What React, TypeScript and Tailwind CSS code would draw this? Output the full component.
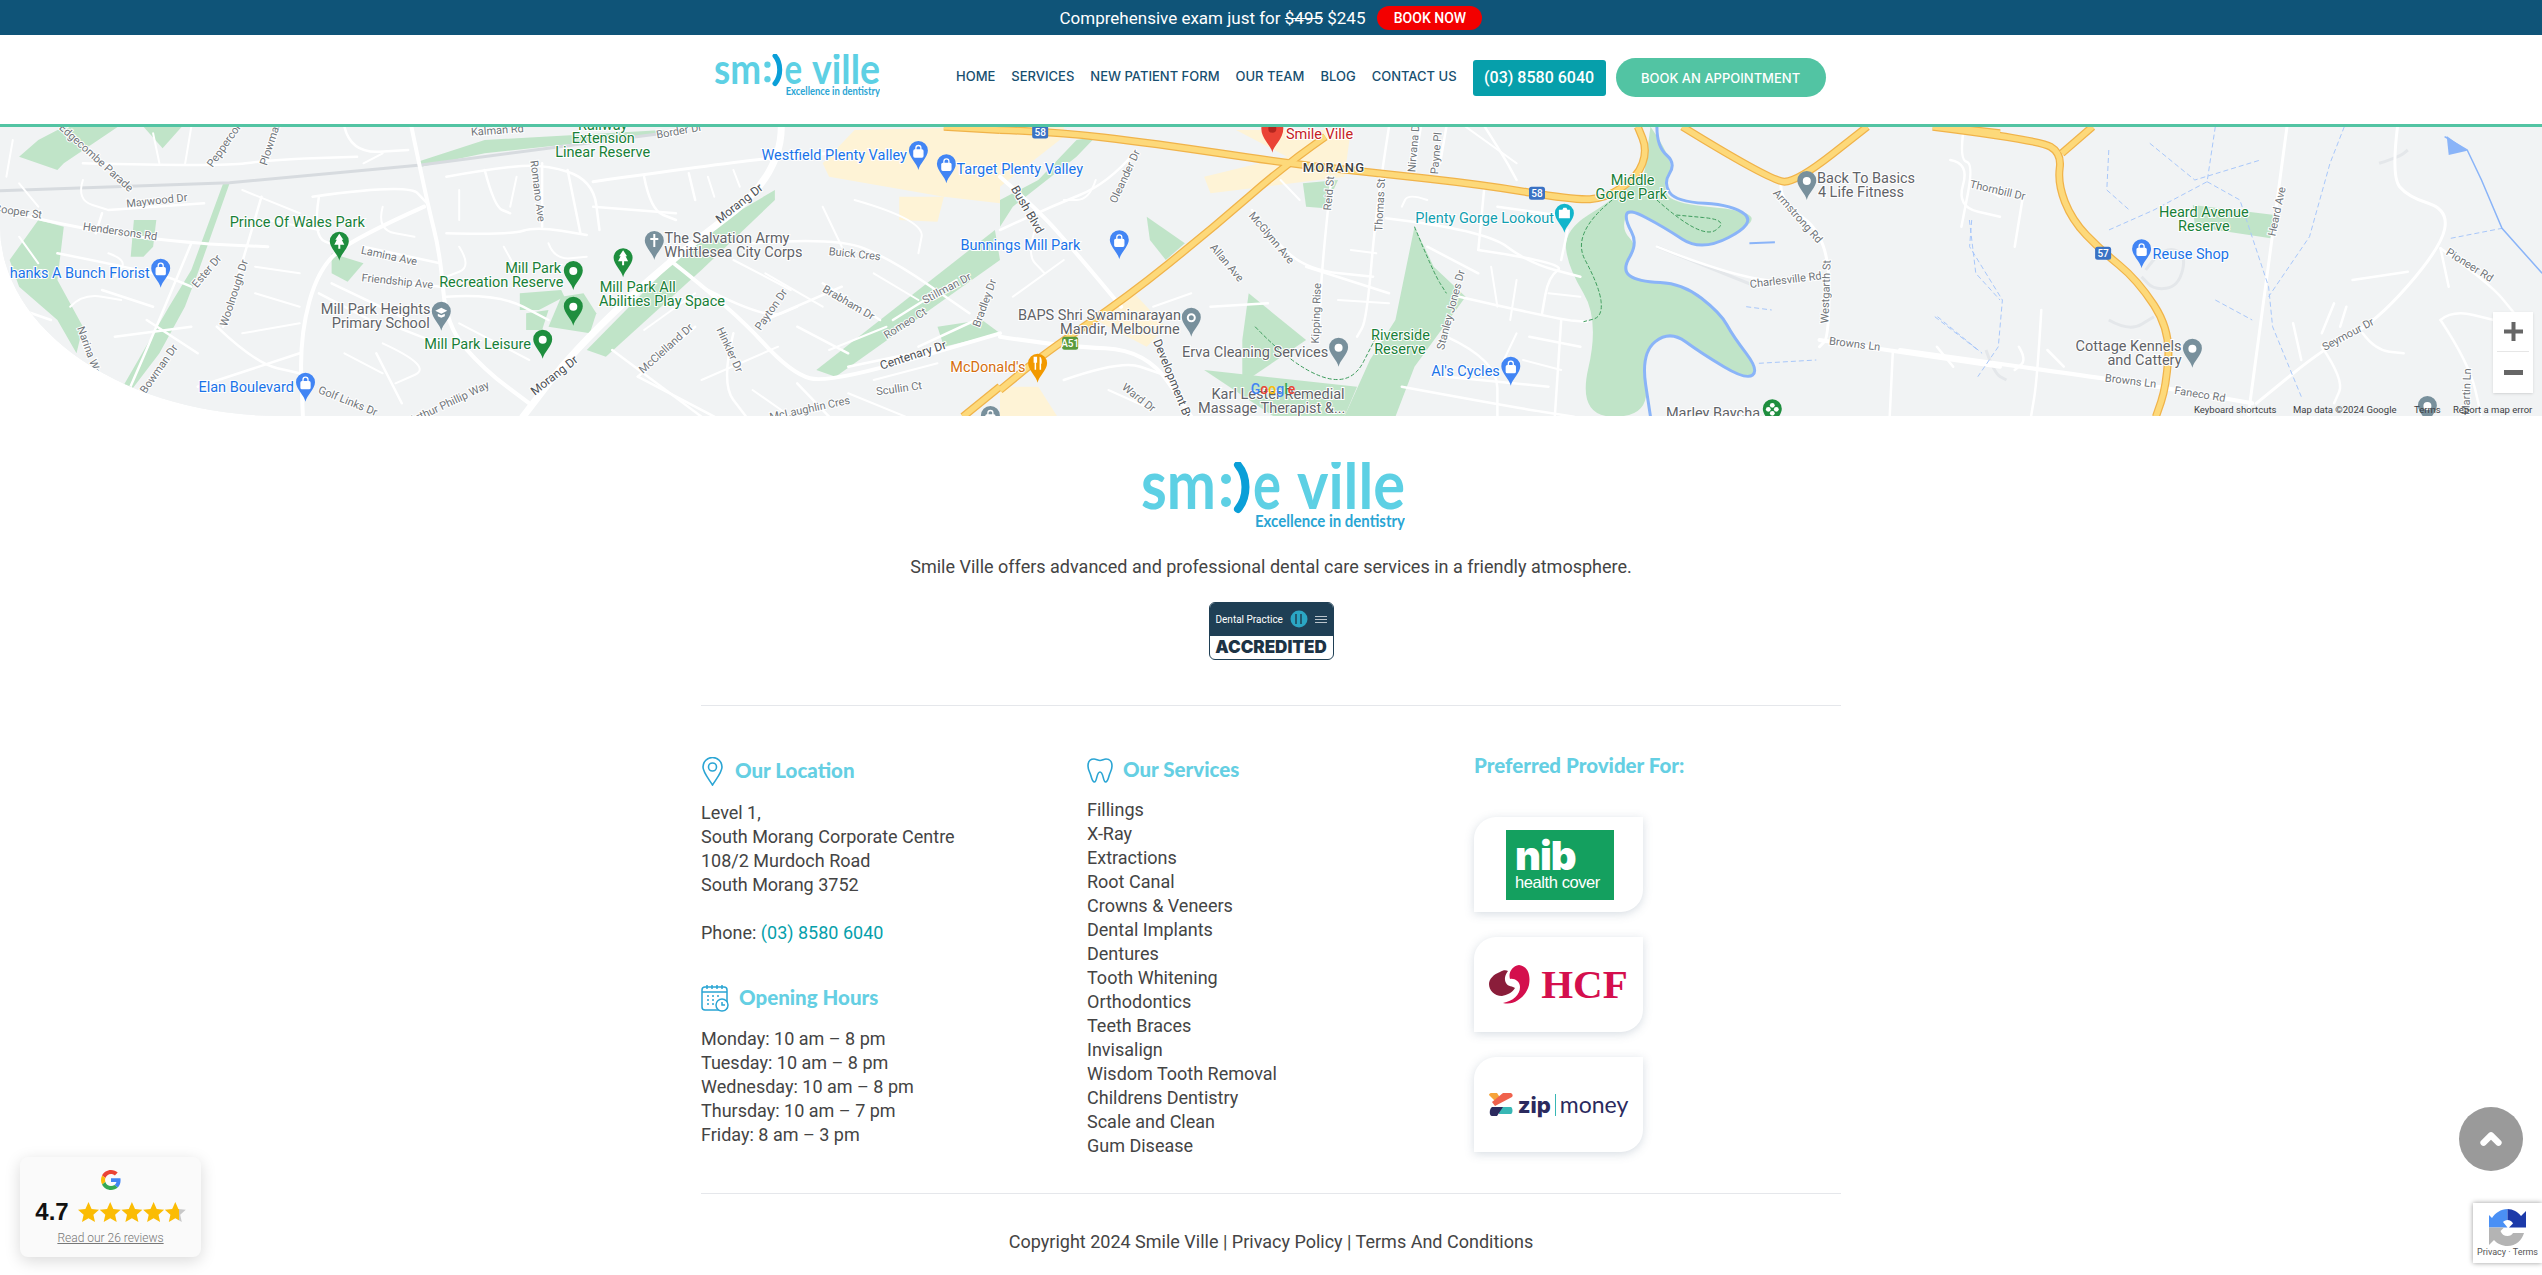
import { ChevronUp } from 'lucide-react';
import type { ReactNode } from 'react';

type Region = 'a' | 'b' | 'c';

// map data was measured on three crops, so each list says which crop its numbers come from
const toPage = (r: Region, x: number, y: number) => {
  if (r === 'a') return [x / 1.568, 120 + y / 3];
  if (r === 'b') return [1000 + x / 1.568, 120 + y / 3];
  return [1900 + x / 2.442, 120 + y / 3];
};

const parse = (r: Region, s: string) =>
  s.split(' ').map((p) => {
    const [x, y] = p.split(',').map(Number);
    return toPage(r, x, y);
  });

const pts = (r: Region, s: string) =>
  parse(r, s)
    .map((p) => `${p[0].toFixed(1)},${p[1].toFixed(1)}`)
    .join(' ');

// rounds the corners of a measured line, for roads and the river
const curve = (r: Region, s: string, close = false) => {
  const p = parse(r, s);
  let d = `M${p[0][0].toFixed(1)} ${p[0][1].toFixed(1)}`;
  for (let i = 1; i < p.length - 1; i++) {
    const mx = (p[i][0] + p[i + 1][0]) / 2;
    const my = (p[i][1] + p[i + 1][1]) / 2;
    d += ` Q${p[i][0].toFixed(1)} ${p[i][1].toFixed(1)} ${mx.toFixed(1)} ${my.toFixed(1)}`;
  }
  const last = p[p.length - 1];
  d += ` L${last[0].toFixed(1)} ${last[1].toFixed(1)}`;
  return close ? d + 'Z' : d;
};

const green: [Region, string][] = [
  ['a', '30,110 60,60 100,20 185,20 100,130 90,150'],
  ['a', '225,20 285,20 255,85'],
  ['a', '15,420 60,300 100,320 90,480 130,620 120,700 90,600 30,500'],
  ['a', '210,300 245,300 240,380 225,410 205,410'],
  ['a', '350,190 360,190 310,460 290,560 250,700 200,825 185,825 265,560 300,450'],
  ['a', '520,400 570,430 545,485 520,460'],
  ['a', '655,125 760,60 1040,30 1050,40 760,100 660,140'],
  ['a', '815,520 880,510 885,530 845,570 815,570'],
  ['a', '825,580 860,570 850,630 825,630'],
  ['a', '880,530 915,520 935,580 925,640 860,620'],
  ['a', '1215,210 1100,340 920,690 950,710 1100,450 1215,240'],
  ['a', '1560,330 1280,750 1310,770 1568,420'],
  ['a', '1540,600 1470,620 1480,680 1568,640'],
  ['b', '120,60 150,50 120,110 20,260 0,320 0,240 60,180'],
  ['b', '230,290 290,370 260,420 235,360'],
  ['b', '475,190 530,180 510,265 480,260'],
  ['b', '650,320 680,440 730,530 650,740 620,890 540,890 580,720 620,600'],
  ['b', '390,520 480,660 380,790 380,660'],
  ['b', '320,750 560,800 540,890 430,890'],
  ['c', '715,255 915,285 905,355 720,320'],
];

const gorgePark =
  '1020,20 1060,130 1040,190 1050,250 1170,270 1185,310 1100,395 1040,320 985,265 975,330 1000,380 975,450 1000,485 1070,490 1130,580 1150,650 1190,750 1170,780 1100,700 1050,630 1005,700 1020,890 905,890 940,600 890,440 885,330 960,240 1010,160';

const sand: [Region, string][] = [
  ['a', '1290,130 1340,30 1568,20 1568,250 1480,230 1410,230 1410,300 1470,305 1480,230 1300,170'],
  ['b', '0,20 100,20 100,50 0,200'],
  ['b', '370,30 550,30 540,170 330,220 320,170 450,110'],
  ['b', '210,520 260,620 230,680 150,600'],
  ['b', '0,800 60,800 90,890 0,890'],
];

// [crop, points, width]
const roads: [Region, string, number][] = [
  ['a', '645,20 670,250 690,400 700,620 760,750 830,850', 4],
  ['a', '665,260 560,350 500,440 470,650 475,890', 4],
  ['a', '1225,20 1225,170 1050,420 900,690 820,890', 7],
  ['a', '1050,420 1150,570 1240,760 1300,790 1568,640', 4],
  ['a', '930,185 1170,120 1300,100', 3],
  ['a', '0,270 130,330 300,370 420,380', 3],
  ['a', '130,130 350,140 420,120 560,110', 2.5],
  ['a', '540,20 550,100 640,90', 2.5],
  ['a', '700,170 760,150 850,130 930,180 940,330', 2.5],
  ['a', '760,150 775,260 800,280', 2.5],
  ['a', '850,130 850,320', 2.5],
  ['a', '890,150 910,340', 2.5],
  ['a', '700,340 800,345 840,320 920,345', 2.5],
  ['a', '1010,170 1020,270 1060,300', 2.5],
  ['a', '1080,160 1090,240', 2.5],
  ['a', '930,260 1060,280', 2.5],
  ['a', '490,230 640,190 670,250', 2.5],
  ['a', '500,230 490,350 530,380', 2.5],
  ['a', '570,380 690,430', 2.5],
  ['a', '570,470 690,500', 2.5],
  ['a', '500,520 580,600', 2.5],
  ['a', '700,530 780,520 860,600', 2.5],
  ['a', '170,270 320,250', 2.5],
  ['a', '160,280 150,340', 2.5],
  ['a', '90,400 250,460 300,500', 2.5],
  ['a', '300,370 250,600 200,820', 2.5],
  ['a', '410,230 350,620', 2.5],
  ['a', '340,620 400,730 470,760', 2.5],
  ['a', '20,560 80,600', 2.5],
  ['a', '160,510 240,560', 2.5],
  ['a', '180,650 300,620', 2.5],
  ['a', '230,600 310,700', 2.5],
  ['a', '310,800 470,700', 2.5],
  ['a', '520,490 640,600', 2.5],
  ['a', '590,700 630,850', 2.5],
  ['a', '620,620 700,680', 2.5],
  ['a', '960,690 1100,890', 2.5],
  ['a', '1090,620 1000,770', 2.5],
  ['a', '1150,640 1130,790 1170,890', 2.5],
  ['a', '1000,770 1120,890', 2.5],
  ['a', '1250,790 1300,890', 2.5],
  ['a', '1180,370 1310,350 1400,420 1520,580', 2.5],
  ['a', '1290,490 1380,600', 2.5],
  ['a', '1200,600 1320,500', 2.5],
  ['a', '1100,500 1200,600 1250,560', 2.5],
  ['a', '1400,600 1500,480', 2.5],
  ['a', '1440,680 1530,600', 2.5],
  ['a', '1250,620 1330,700', 2.5],
  ['a', '1330,740 1480,680', 2.5],
  // side streets
  ['a', '240,40 250,130', 2],
  ['a', '300,20 290,135', 2],
  ['a', '20,60 10,170', 2],
  ['a', '130,180 120,240 170,270', 2],
  ['a', '30,190 60,260', 2],
  ['a', '380,210 470,280', 2],
  ['a', '420,300 500,330', 2],
  ['a', '170,400 200,420 180,470', 2],
  ['a', '30,350 60,430', 2],
  ['a', '110,560 130,520 190,540', 2],
  ['a', '400,440 470,460', 2],
  ['a', '400,520 470,560', 2],
  ['a', '380,640 470,610', 2],
  ['a', '570,130 600,100', 2],
  ['a', '600,260 590,330 650,350', 2],
  ['a', '720,210 720,300', 2],
  ['a', '810,170 800,260', 2],
  ['a', '720,380 740,440 700,470', 2],
  ['a', '790,380 810,450', 2],
  ['a', '860,370 870,420 920,410', 2],
  ['a', '600,670 680,740 620,790', 2],
  ['a', '540,700 600,760', 2],
  ['a', '720,610 830,720', 2],
  ['a', '1110,170 1120,230', 2],
  ['a', '1150,150 1160,200', 2],
  ['a', '1290,260 1320,380', 2],
  ['a', '1340,240 1450,300 1440,400', 2],
  ['a', '1370,460 1440,540', 2],
  ['a', '1150,420 1240,510', 2],
  ['a', '1200,460 1290,560', 2],
  ['a', '1010,630 1090,520', 2],
  ['a', '1220,680 1100,780', 2],
  ['a', '1390,620 1300,690', 2],
  ['a', '1370,780 1470,730', 2],
  ['a', '1180,810 1240,890', 2],
  ['a', '1330,820 1420,890', 2],
  ['b', '0,170 60,270 120,400 190,560', 4],
  ['b', '0,650 100,680 230,690 300,890', 4],
  ['b', '210,100 170,190 80,260 0,330', 2.5],
  ['b', '395,270 420,340 480,450 585,470', 2.5],
  ['b', '520,170 505,420 500,650', 2.5],
  ['b', '610,20 590,260 575,600 560,650', 2.5],
  ['b', '660,20 650,130', 2.5],
  ['b', '700,20 690,130', 2.5],
  ['b', '605,295 760,330 830,430 910,470', 2.5],
  ['b', '750,390 890,430 860,470 850,580', 2.5],
  ['b', '670,380 750,460', 2.5],
  ['b', '480,440 610,520', 2.5],
  ['b', '720,530 880,600 920,605', 2.5],
  ['b', '880,600 870,890', 2.5],
  ['b', '700,650 780,720 780,890', 2.5],
  ['b', '830,650 910,680', 2.5],
  ['b', '630,800 800,860 900,890', 2.5],
  ['b', '700,770 860,800', 2.5],
  ['b', '760,20 790,110 810,180', 2.5],
  ['b', '760,190 750,390', 2.5],
  ['b', '780,260 890,290', 2.5],
  ['b', '890,330 880,420', 2.5],
  ['b', '330,560 420,550', 2.5],
  ['b', '100,780 190,720 250,760', 2.5],
  ['b', '1225,190 1220,240 1300,350 1300,650 1285,680', 3],
  ['b', '1030,380 1180,495 1290,470', 2.5],
  ['b', '1285,660 1568,740', 4],
  ['b', '1400,690 1395,890', 2.5],
  ['b', '1490,120 1520,130 1500,260 1568,290', 2.5],
  ['b', '1530,190 1568,230', 2.5],
  ['b', '150,180 140,240 100,240', 2],
  ['b', '60,300 40,400 70,460', 2],
  ['b', '100,420 20,530', 2],
  ['b', '240,560 300,520', 2],
  ['b', '440,180 470,240', 2],
  ['b', '550,390 590,400', 2],
  ['b', '530,540 610,550', 2],
  ['b', '670,240 640,220 630,260', 2],
  ['b', '730,20 810,130', 2],
  ['b', '770,440 780,560', 2],
  ['b', '810,480 800,600', 2],
  ['b', '860,520 910,530', 2],
  ['b', '810,640 790,720', 2],
  ['b', '820,720 880,750', 2],
  ['b', '170,810 240,870', 2],
  ['c', '0,690 500,775 680,810 860,850', 4],
  ['c', '850,890 945,20', 3],
  ['c', '155,30 145,120 180,130 150,320', 2.5],
  ['c', '300,230 280,380', 2.5],
  ['c', '345,570 335,780 320,890', 2.5],
  ['c', '90,680 130,740', 2.5],
  ['c', '290,680 310,720 280,750', 2.5],
  ['c', '360,690 400,740', 2.5],
  ['c', '1215,20 1200,170 1240,230 1340,270 1320,385 1160,610 1040,680 870,850', 3],
  ['c', '1320,385 1440,490 1500,580', 2.5],
  ['c', '1105,480 1240,455', 2.5],
  ['c', '1320,385 1340,500', 2.5],
  ['c', '1030,680 1085,780 1060,850', 2.5],
  ['c', '1130,640 1160,690 1230,700', 2.5],
  ['c', '1320,600 1350,570 1450,600', 2.5],
  ['c', '1320,600 1390,730 1420,890', 2.5],
  ['c', '1030,640 1060,550', 2.5],
  ['c', '1075,620 1090,560', 2.5],
  ['c', '960,610 980,720', 2.5],
];

// pale estate loops beside the freeway
const faintRoads: [Region, string][] = [
  ['c', '600,450 640,380 700,400 680,500 620,510 590,470'],
  ['c', '510,600 560,635 620,590'],
  ['c', '1170,130 1220,110 1240,90'],
  ['c', '210,690 230,760 260,780'],
  ['b', '1030,380 1180,495'],
];

const highways: [Region, string][] = [
  ['a', '1480,20 1568,30'],
  ['b', '0,30 85,35 240,70 450,130 570,155 760,195 900,240 950,235 1000,170 1015,90 1000,20'],
  ['b', '510,50 450,130 330,330 200,530 70,700 0,810'],
  ['a', '1568,800 1510,890'],
  ['b', '1070,20 1210,185 1250,185 1360,20'],
  ['b', '1480,20 1568,40'],
  ['c', '80,20 340,60 395,100 385,190 420,300 490,390 580,480 660,630 650,800 625,890'],
  ['c', '470,20 395,100'],
];

const riverLine =
  '1030,20 1030,80 1060,130 1040,190 1060,245 1150,255 1185,310 1100,395 1040,320 985,265 980,300 1000,370 975,450 1000,485 1070,490 1130,580 1150,650 1190,750 1170,780 1100,700 1050,630 1005,700 1020,890';

const streams: [Region, string][] = [
  ['c', '610,70 720,180 880,120'],
  ['c', '770,20 750,185 620,270 510,330'],
  ['c', '510,90 505,210 560,270'],
  ['c', '750,185 830,240 900,500 910,620 980,830'],
  ['c', '1085,20 1050,130 1000,350 900,530'],
  ['c', '175,300 170,380 250,540 240,680 190,770'],
  ['c', '85,590 190,690'],
  ['c', '770,540 860,600'],
  ['c', '1345,355 1470,325'],
  ['b', '1520,300 1530,460 1568,540'],
  ['b', '1190,730 1280,720'],
  ['b', '1170,560 1210,570'],
  ['b', '1470,590 1540,700'],
];

const trails: [Region, string][] = [
  ['b', '960,240 895,340 940,500 945,590 915,605'],
  ['b', '1030,240 1100,360 1145,300 1060,285'],
  ['b', '400,620 460,740 550,800 590,650'],
  ['b', '650,320 680,460 700,520'],
];

type PinKind = 'dot' | 'bag' | 'tree' | 'cross' | 'school' | 'camera' | 'fork' | 'om' | 'flower';

const pins: [Region, number, number, string, PinKind][] = [
  ['a', 532, 422, '#1e8e3e', 'tree'],
  ['a', 977, 472, '#1e8e3e', 'tree'],
  ['a', 899, 510, '#1e8e3e', 'dot'],
  ['a', 899, 617, '#1e8e3e', 'dot'],
  ['a', 851, 716, '#1e8e3e', 'dot'],
  ['a', 1026, 420, '#78909c', 'cross'],
  ['a', 692, 632, '#78909c', 'school'],
  ['a', 252, 503, '#4285f4', 'bag'],
  ['a', 1440, 150, '#4285f4', 'bag'],
  ['a', 1484, 190, '#4285f4', 'bag'],
  ['a', 479, 845, '#4285f4', 'bag'],
  ['a', 1553, 945, '#78909c', 'bag'],
  ['b', 187, 418, '#4285f4', 'bag'],
  ['b', 801, 797, '#4285f4', 'bag'],
  ['b', 885, 338, '#12b5cb', 'camera'],
  ['b', 1265, 240, '#78909c', 'dot'],
  ['b', 300, 650, '#78909c', 'om'],
  ['b', 531, 740, '#78909c', 'dot'],
  ['b', 59, 788, '#f29900', 'fork'],
  ['b', 1211, 925, '#1e8e3e', 'flower'],
  ['c', 590, 445, '#4285f4', 'bag'],
  ['c', 714, 743, '#78909c', 'dot'],
  ['c', 1288, 915, '#78909c', 'dot'],
];

const poi = { g: '#188038', b: '#1a73e8', k: '#5f6368', t: '#129eaf', o: '#d56e0c', r: '#c5221f' };

// [crop, x, y, text, colour]
const places: [Region, number, number, string, keyof typeof poi][] = [
  ['a', 945, 20, 'Railway', 'g'],
  ['a', 946, 58, 'Extension', 'g'],
  ['a', 945, 100, 'Linear Reserve', 'g'],
  ['a', 466, 310, 'Prince Of Wales Park', 'g'],
  ['a', 836, 448, 'Mill Park', 'g'],
  ['a', 786, 490, 'Recreation Reserve', 'g'],
  ['a', 1000, 505, 'Mill Park All', 'g'],
  ['a', 1038, 547, 'Abilities Play Space', 'g'],
  ['a', 749, 676, 'Mill Park Leisure', 'g'],
  ['a', 1308, 108, 'Westfield Plenty Valley', 'b'],
  ['a', 125, 463, 'hanks A Bunch Florist', 'b'],
  ['a', 386, 805, 'Elan Boulevard', 'b'],
  ['a', 1140, 358, 'The Salvation Army', 'k'],
  ['a', 1150, 400, 'Whittlesea City Corps', 'k'],
  ['a', 589, 570, 'Mill Park Heights', 'k'],
  ['a', 597, 613, 'Primary School', 'k'],
  ['b', 31, 152, 'Target Plenty Valley', 'b'],
  ['b', 501, 45, 'Smile Ville', 'r'],
  ['b', 32, 380, 'Bunnings Mill Park', 'b'],
  ['b', 730, 757, "Al's Cycles", 'b'],
  ['b', 760, 298, 'Plenty Gorge Lookout', 't'],
  ['b', 992, 184, 'Middle', 'g'],
  ['b', 990, 226, 'Gorge Park', 'g'],
  ['b', 628, 650, 'Riverside', 'g'],
  ['b', 627, 692, 'Reserve', 'g'],
  ['b', 1118, 884, 'Marley Baycha', 'k'],
  ['b', 1358, 178, 'Back To Basics', 'k'],
  ['b', 1350, 220, '4 Life Fitness', 'k'],
  ['b', 156, 589, 'BAPS Shri Swaminarayan', 'k'],
  ['b', 188, 631, 'Mandir, Melbourne', 'k'],
  ['b', 400, 700, 'Erva Cleaning Services', 'k'],
  ['b', 436, 826, 'Karl Lester Remedial', 'k'],
  ['b', 426, 869, 'Massage Therapist &...', 'k'],
  ['b', -19, 746, "McDonald's", 'o'],
  ['c', 742, 280, 'Heard Avenue', 'g'],
  ['c', 742, 322, 'Reserve', 'g'],
  ['c', 710, 406, 'Reuse Shop', 'b'],
  ['c', 558, 682, 'Cottage Kennels', 'k'],
  ['c', 597, 724, 'and Cattery', 'k'],
];

// [crop, x, y, text, rotation, major road]
const streets: [Region, number, number, string, number, boolean?][] = [
  ['a', 246, 244, 'Maywood Dr', -6],
  ['a', 28, 277, 'Cooper St', 8],
  ['a', 188, 337, 'Hendersons Rd', 8],
  ['a', 610, 410, 'Lamina Ave', 12],
  ['a', 623, 486, 'Friendship Ave', 6],
  ['a', 1160, 252, 'Morang Dr', -38, true],
  ['a', 870, 768, 'Morang Dr', -38, true],
  ['a', 842, 213, 'Romano Ave', 83],
  ['a', 1340, 404, 'Buick Cres', 6],
  ['a', 1330, 550, 'Brabham Dr', 30],
  ['a', 1210, 570, 'Payton Dr', -55],
  ['a', 1485, 507, 'Stillman Dr', -28],
  ['a', 1420, 612, 'Romeo Ct', -32],
  ['a', 1545, 550, 'Bradley Dr', -70],
  ['a', 1432, 708, 'Centenary Dr', -18, true],
  ['a', 1410, 808, 'Scullin Ct', -8],
  ['a', 1270, 868, 'McLaughlin Cres', -12],
  ['a', 1045, 687, 'McClelland Dr', -42],
  ['a', 1143, 690, 'Hinkler Dr', 65],
  ['a', 368, 520, 'Woolnough Dr', -72],
  ['a', 325, 455, 'Ester Dr', -50],
  ['a', 250, 748, 'Bowman Dr', -55],
  ['a', 140, 700, 'Narina Way', 70],
  ['a', 545, 845, 'Golf Links Dr', 22],
  ['a', 705, 850, 'Arthur Phillip Way', -25],
  ['a', 425, 70, 'Plowman', -72],
  ['a', 355, 70, 'Peppercorn', -55],
  ['a', 780, 33, 'Kalman Rd', -4],
  ['a', 1065, 35, 'Border Dr', -10],
  ['a', 150, 115, 'Edgecombe Parade', 42],
  ['b', 42, 270, 'Bush Blvd', 60, true],
  ['b', 197, 170, 'Oleander Dr', -65],
  ['b', 517, 220, 'Reid St', -85],
  ['b', 425, 355, 'McGlynn Ave', 50],
  ['b', 355, 430, 'Allan Ave', 50],
  ['b', 497, 580, 'Kipping Rise', -88],
  ['b', 597, 255, 'Thomas St', -87],
  ['b', 650, 80, 'Nirvana Dr', -85],
  ['b', 685, 100, 'Payne Pl', -85],
  ['b', 708, 570, 'Stanley Jones Dr', -75],
  ['b', 272, 790, 'Development Bvd', 68, true],
  ['b', 217, 835, 'Ward Dr', 38],
  ['b', 1250, 290, 'Armstrong Rd', 48],
  ['b', 1296, 515, 'Westgarth St', -88],
  ['b', 1232, 482, 'Charlesville Rd', -7],
  ['b', 1340, 674, 'Browns Ln', 7],
  ['c', 238, 213, 'Thornbill Dr', 13],
  ['c', 922, 275, 'Heard Ave', -78],
  ['c', 1095, 645, 'Seymour Dr', -28],
  ['c', 1390, 437, 'Pioneer Rd', 32],
  ['c', 563, 785, 'Browns Ln', 7],
  ['c', 732, 825, 'Faneco Rd', 9],
  ['c', 1385, 815, 'Martin Ln', -88],
];

const shields: [Region, number, number, string, string][] = [
  ['b', 63, 36, '58', '#3a72c4'],
  ['b', 842, 220, '58', '#3a72c4'],
  ['b', 110, 670, 'A51', '#5a9a3c'],
  ['c', 496, 400, '57', '#3a72c4'],
];

function PinGlyph({ kind }: { kind: PinKind }) {
  if (kind === 'dot') return <circle cx="0" cy="-19" r="4" fill="#fff" />;
  if (kind === 'bag')
    return (
      <g fill="none" stroke="#fff" strokeWidth="1.3">
        <rect x="-4.5" y="-20" width="9" height="7" rx="1" fill="#fff" />
        <path d="M-2.5 -20 v-2 a2.5 2.5 0 0 1 5 0 v2" />
      </g>
    );
  if (kind === 'tree') return <path d="M0 -27 L4 -21 H2.5 L5 -16 H1 V-12 H-1 V-16 H-5 L-2.5 -21 H-4 Z" fill="#fff" />;
  if (kind === 'cross') return <path d="M-1 -26 H1 V-22 H4 V-20 H1 V-13 H-1 V-20 H-4 V-22 H-1 Z" fill="#fff" />;
  if (kind === 'school') return <path d="M-6 -20 L0 -23 L6 -20 L0 -17 Z M-3.5 -17 V-14.5 L0 -13 L3.5 -14.5 V-17 L0 -15.5 Z" fill="#fff" />;
  if (kind === 'camera') return <path d="M-5.5 -23 H-2 L-1 -25 H2 L3 -23 H5.5 V-14.5 H-5.5 Z" fill="#fff" />;
  if (kind === 'fork') return <path d="M-4 -26 V-20 H-3 V-13 H-1.5 V-20 H-0.5 V-26 Z M2 -26 C4 -26 4.5 -22 4 -19 H3.5 V-13 H2 Z" fill="#fff" />;
  if (kind === 'om') return <circle cx="0" cy="-19" r="3.5" fill="none" stroke="#fff" strokeWidth="2" />;
  return (
    <g fill="#fff">
      <circle cx="0" cy="-23" r="2.4" />
      <circle cx="4" cy="-19" r="2.4" />
      <circle cx="-4" cy="-19" r="2.4" />
      <circle cx="0" cy="-15" r="2.4" />
    </g>
  );
}

function MapArea() {
  return (
    <div className="h-[289px] overflow-hidden rounded-bl-[280px_190px] bg-[#f1f3f4] relative">
      <svg width="2542" height="289" viewBox="0 127 2542 289" className="block font-['Roboto',sans-serif]">
        <rect x="0" y="127" width="2542" height="289" fill="#f1f3f4" />
        {sand.map(([r, s], i) => (
          <polygon key={i} points={pts(r, s)} fill="#fef3d6" />
        ))}
        {green.map(([r, s], i) => (
          <polygon key={i} points={pts(r, s)} fill="#c0e4c8" />
        ))}
        <path d={curve('b', gorgePark, true)} fill="#c0e4c8" />
        <polyline points={pts('a', '0,212 360,188 660,135 1040,40')} fill="none" stroke="#d7dbdf" strokeWidth="3" />
        {faintRoads.map(([r, s], i) => (
          <path key={i} d={curve(r, s)} fill="none" stroke="#e4e7ea" strokeWidth="3" />
        ))}
        {roads.map(([r, s, w], i) => (
          <path key={i} d={curve(r, s)} fill="none" stroke="#fff" strokeWidth={w} strokeLinecap="round" />
        ))}
        {streams.map(([r, s], i) => (
          <polyline key={i} points={pts(r, s)} fill="none" stroke="#a8c7fa" strokeWidth="1" strokeDasharray="5 3" />
        ))}
        {trails.map(([r, s], i) => (
          <path key={i} d={curve(r, s)} fill="none" stroke="#3d9c5c" strokeWidth="1" strokeDasharray="4 2" />
        ))}
        <path d={curve('b', riverLine)} fill="none" stroke="#8ab4f8" strokeWidth="3" />
        <polyline points={pts('c', '1330,50 1385,90 1420,180 1470,325 1568,460')} fill="none" stroke="#8ab4f8" strokeWidth="1.5" />
        <polygon points={pts('c', '1335,48 1385,92 1340,105')} fill="#8ab4f8" />
        <polyline points={pts('b', '1175,370 1215,367')} fill="none" stroke="#8ab4f8" strokeWidth="2" />
        {highways.map(([r, s], i) => (
          <path key={i} d={curve(r, s)} fill="none" stroke="#f0b34a" strokeWidth="8" />
        ))}
        {highways.map(([r, s], i) => (
          <path key={i} d={curve(r, s)} fill="none" stroke="#fdd97a" strokeWidth="5.5" />
        ))}
        {shields.map(([r, x, y, t, c], i) => {
          const [px, py] = toPage(r, x, y);
          return (
            <g key={i}>
              <rect x={px - 8} y={py - 6.5} width="16" height="13" rx="2.5" fill={c} />
              <text x={px} y={py + 3.5} textAnchor="middle" fontSize="10" fontWeight="500" fill="#fff">
                {t}
              </text>
            </g>
          );
        })}
        {streets.map(([r, x, y, t, rot, major], i) => {
          const [px, py] = toPage(r, x, y);
          return (
            <text
              key={i}
              transform={`translate(${px.toFixed(1)} ${py.toFixed(1)}) rotate(${rot})`}
              textAnchor="middle"
              dominantBaseline="middle"
              fontSize={major ? 12 : 11}
              fill={major ? '#4d5156' : '#70757a'}
              stroke="#fff"
              strokeWidth="2"
              paintOrder="stroke"
            >
              {t}
            </text>
          );
        })}
        {pins.map(([r, x, y, c, kind], i) => {
          const [px, py] = toPage(r, x, y);
          return (
            <g key={i} transform={`translate(${px.toFixed(1)} ${py.toFixed(1)})`}>
              <path d="M0 0 C-1 -6 -9.5 -13 -9.5 -19.5 A9.5 9.5 0 1 1 9.5 -19.5 C9.5 -13 1 -6 0 0 Z" fill={c} />
              <PinGlyph kind={kind} />
            </g>
          );
        })}
        <g transform={`translate(${toPage('b', 427, 98).join(' ')})`}>
          <path d="M0 0 C-1 -7 -11 -14 -11 -24 A11 11 0 1 1 11 -24 C11 -14 1 -7 0 0 Z" fill="#ea4335" />
          <circle cx="0" cy="-24" r="4" fill="#b3261e" />
        </g>
        {places.map(([r, x, y, t, c], i) => {
          const [px, py] = toPage(r, x, y);
          return (
            <text key={i} x={px} y={py} textAnchor="middle" dominantBaseline="middle" fontSize="14.5" fill={poi[c]} stroke="#fff" strokeWidth="2" paintOrder="stroke">
              {t}
            </text>
          );
        })}
        <text x={1334} y={172} textAnchor="middle" fontSize="13" fontWeight="500" letterSpacing="1.2" fill="#3c4043" stroke="#fff" strokeWidth="2" paintOrder="stroke">
          MORANG
        </text>
        <text x={1273} y={394} textAnchor="middle" fontSize="14" fontWeight="500">
          <tspan fill="#4285f4">G</tspan>
          <tspan fill="#ea4335">o</tspan>
          <tspan fill="#fbbc04">o</tspan>
          <tspan fill="#4285f4">g</tspan>
          <tspan fill="#34a853">l</tspan>
          <tspan fill="#ea4335">e</tspan>
        </text>
        <g fontSize="9.5" fill="#3c4043">
          <text x={2194} y={413}>Keyboard shortcuts</text>
          <text x={2293} y={413}>Map data ©2024 Google</text>
          <text x={2414} y={413}>Terms</text>
          <text x={2453} y={413}>Report a map error</text>
        </g>
      </svg>
      {/* zoom buttons sit on top of the map */}
      <div className="absolute left-[2493px] top-[185px] w-10 h-[81px] bg-white shadow flex flex-col items-center">
        <div className="h-10 w-8 flex items-center justify-center border-b border-[#e6e6e6] text-[#666]">
          <svg width="19" height="19" viewBox="0 0 19 19">
            <path d="M0 7.5H7.5V0H11.5V7.5H19V11.5H11.5V19H7.5V11.5H0Z" fill="#666" />
          </svg>
        </div>
        <div className="flex-1 flex items-center justify-center">
          <svg width="19" height="5" viewBox="0 0 19 5">
            <rect width="19" height="5" fill="#666" />
          </svg>
        </div>
      </div>
    </div>
  );
}

function Logo({ width }: { width: number }) {
  return (
    <svg width={width} viewBox="0 0 264 70" className="block">
      <g fill="#5dd0e4" fontFamily="Lato, sans-serif" fontSize="68" fontWeight="700">
        <text x="0" y="47" textLength="75" lengthAdjust="spacingAndGlyphs">
          sm
        </text>
        <text x="112" y="47" textLength="28" lengthAdjust="spacingAndGlyphs">
          e
        </text>
        <text x="156" y="47" textLength="108" lengthAdjust="spacingAndGlyphs">
          ville
        </text>
      </g>
      <circle cx="85" cy="17" r="5" fill="#5dd0e4" />
      <circle cx="85" cy="40" r="5" fill="#5dd0e4" />
      <path d="M97 3 C107 15 107 35 97 47" fill="none" stroke="#0a9fd8" strokeWidth="8" strokeLinecap="round" />
      <text x="114" y="65" textLength="150" lengthAdjust="spacingAndGlyphs" fill="#2aa5d4" fontFamily="Lato, sans-serif" fontSize="17" fontWeight="700">
        Excellence in dentistry
      </text>
    </svg>
  );
}

function Accredited() {
  return (
    <div className="w-[125px] h-[58px] rounded-md overflow-hidden border border-[#1f3f55] flex flex-col bg-white">
      <div className="h-[33px] bg-[#1f3f55] flex items-center px-1.5 gap-[7px]">
        <span className="text-[10px] font-normal text-white whitespace-nowrap">Dental Practice</span>
        <svg width="18" height="22" viewBox="0 0 18 22" className="shrink-0">
          <circle cx="9" cy="10" r="8.5" fill="#2ba6c4" />
          <path d="M6 5 V15 M11 5 V15" stroke="#1f3f55" strokeWidth="1.5" />
        </svg>
        <div className="w-5 flex flex-col gap-[2px]">
          <div className="h-px bg-white/70" />
          <div className="h-px bg-white/70" />
          <div className="h-px bg-white/70" />
        </div>
      </div>
      <div className="flex-1 flex items-center justify-center font-['Inter',sans-serif] text-[17px] leading-none font-black text-[#1c3345]">ACCREDITED</div>
    </div>
  );
}

function ProviderCard({ children }: { children: ReactNode }) {
  return (
    <div className="w-[169px] h-[95px] bg-white rounded-tl-[22px] rounded-br-[22px] shadow-[0_2px_10px_rgba(120,140,160,0.3)] flex items-center justify-center">
      {children}
    </div>
  );
}

const services = ['Fillings', 'X-Ray', 'Extractions', 'Root Canal', 'Crowns & Veneers', 'Dental Implants', 'Dentures', 'Tooth Whitening', 'Orthodontics', 'Teeth Braces', 'Invisalign', 'Wisdom Tooth Removal', 'Childrens Dentistry', 'Scale and Clean', 'Gum Disease'];
const hours = ['Monday: 10 am – 8 pm', 'Tuesday: 10 am – 8 pm', 'Wednesday: 10 am – 8 pm', 'Thursday: 10 am – 7 pm', 'Friday: 8 am – 3 pm'];
const nav = ['HOME', 'SERVICES', 'NEW PATIENT FORM', 'OUR TEAM', 'BLOG', 'CONTACT US'];

const headingClass = "font-['Lato',sans-serif] font-black text-[20.5px] leading-none text-[#65cfe3] -mt-0.5";

export default function App() {
  return (
    <div className="relative w-[2542px] h-[1275px] overflow-hidden bg-white font-['Roboto',sans-serif] font-normal text-[18px] leading-6 text-[#444]">
      <div className="h-[35px] bg-[#0f5478] flex items-center justify-center gap-3 text-white text-[17px] font-normal">
        <span>
          Comprehensive exam just for <span className="line-through">$495</span> $245
        </span>
        <span className="h-6 w-[105px] rounded-full bg-[#f30000] flex items-center justify-center text-[14px] font-medium">BOOK NOW</span>
      </div>

      <header className="h-[92px] border-b-[3px] border-[#52c4a3] bg-white">
        <div className="w-[1138px] ml-[702px] h-full flex items-center">
          <div className="ml-3 -mt-2">
            <Logo width={166} />
          </div>
          <nav className="ml-[76px] flex items-center gap-4 text-[#174f70] font-['Inter',sans-serif] font-medium text-[13px] -mt-2 whitespace-nowrap">
            {nav.map((n) => (
              <span key={n}>{n}</span>
            ))}
          </nav>
          <div className="ml-4 w-[133px] h-9 bg-[#069fab] text-white rounded-[3px] flex items-center justify-center text-[16px] font-medium -mt-1">(03) 8580 6040</div>
          <div className="ml-2.5 w-[210px] h-[39px] bg-[#52c4a3] text-white rounded-full flex items-center justify-center font-['Inter',sans-serif] font-medium text-[13px] -mt-1">BOOK AN APPOINTMENT</div>
        </div>
      </header>

      <MapArea />

      <footer className="flex flex-col items-center">
        <div className="mt-[46px] ml-1">
          <Logo width={264} />
        </div>
        <p className="mt-[21px] leading-[27px]">Smile Ville offers advanced and professional dental care services in a friendly atmosphere.</p>
        <div className="mt-[22px]">
          <Accredited />
        </div>
        <div className="mt-[45px] w-[1140px] border-t border-[#e5e7eb] grid grid-cols-[386px_387px_1fr] pt-[51px] pb-[35px]">
          <div>
            <div className="flex items-center gap-[11px] h-[29px]">
              <svg width="23" height="29" viewBox="0 0 21 29" fill="none" stroke="#2aa5d4" strokeWidth="1.6">
                <path d="M10.5 28 C6 21 1 15 1 10 A9.5 9.5 0 0 1 20 10 C20 15 15 21 10.5 28 Z" />
                <circle cx="10.5" cy="10" r="4" />
              </svg>
              <h3 className={headingClass}>Our Location</h3>
            </div>
            <div className="mt-[15px]">
              <p>Level 1,</p>
              <p>South Morang Corporate Centre</p>
              <p>108/2 Murdoch Road</p>
              <p>South Morang 3752</p>
              <p className="mt-6">
                Phone: <span className="text-[#069fab]">(03) 8580 6040</span>
              </p>
            </div>
            <div className="mt-[39px] flex items-center gap-[10px] h-[28px]">
              <svg width="28" height="28" viewBox="0 0 28 28" fill="none" stroke="#2aa5d4" strokeWidth="1.5">
                <rect x="1" y="3" width="25" height="23" rx="3" />
                <path d="M1 8 H26 M6 1 V5 M11 1 V5 M16 1 V5 M21 1 V5" />
                <path d="M6 12 H8 M11 12 H13 M16 12 H18 M6 16 H8 M11 16 H13 M6 20 H8 M11 20 H13" />
                <circle cx="21" cy="21" r="6" fill="#fff" />
                <path d="M21 18 V21 H24" />
              </svg>
              <h3 className={headingClass}>Opening Hours</h3>
            </div>
            <div className="mt-[15px]">
              {hours.map((h) => (
                <p key={h}>{h}</p>
              ))}
            </div>
          </div>

          <div>
            <div className="flex items-center gap-[10px] h-[26px]">
              <svg width="26" height="25" viewBox="0 0 26 25" fill="none" stroke="#2aa5d4" strokeWidth="1.6">
                <path d="M7 1 C3 1 1 4 1 8 C1 12 3 14 4 18 C5 22 6 24 7.5 24 C10 24 9.5 14 13 14 C16.5 14 16 24 18.5 24 C20 24 21 22 22 18 C23 14 25 12 25 8 C25 4 23 1 19 1 C17 1 15 2.5 13 2.5 C11 2.5 9 1 7 1 Z" />
              </svg>
              <h3 className={headingClass}>Our Services</h3>
            </div>
            <ul className="mt-[15px]">
              {services.map((s) => (
                <li key={s}>{s}</li>
              ))}
            </ul>
          </div>

          <div>
            <h3 className={`${headingClass} h-5`}>Preferred Provider For:</h3>
            <div className="mt-[42px] flex flex-col gap-[25px]">
              <ProviderCard>
                <div className="ml-[3px] w-[108px] h-[70px] bg-[#14a05f] text-white flex flex-col pl-[9px] pt-[11px]">
                  <span className="font-['Inter',sans-serif] font-black text-[40px] leading-[30px] tracking-tight">nib</span>
                  <span className="font-['Liberation_Sans',sans-serif] font-normal text-[16.5px] leading-[22px] tracking-tight whitespace-nowrap">health cover</span>
                </div>
              </ProviderCard>
              <ProviderCard>
                <div className="flex items-center gap-[11px]">
                  <svg width="41" height="39" viewBox="0 0 41 39">
                    <path d="M30 0 C38 1 42 9 40 20 C37 32 25 41 14 38 C24 36 31 30 31 22 C31 16 25 13 21 14 C19 8 23 1 30 0 Z" fill="#d40f4d" />
                    <path d="M11 7 C14 5 17 5 19 6 C16 10 15 14 17 18 C19 22 24 21 26 23 C23 28 18 30 13 31 C5 31 0 25 0 19 C0 14 5 9 11 7 Z" fill="#8a1d3a" />
                  </svg>
                  <span className="font-['Liberation_Serif',serif] font-bold text-[41px] leading-none text-[#d40f4d]">HCF</span>
                </div>
              </ProviderCard>
              <ProviderCard>
                <div className="flex items-center">
                  <svg width="24" height="24" viewBox="0 0 24 24" className="mr-[5px]">
                    <path d="M0 2 C0 1 1 0 2 0 H8 L12 6 L6 8 Z" fill="#f6a33a" />
                    <path d="M14 0 H22 C24 1 24 3 23 4 L6 13 L3 9 Z" fill="#f0624d" />
                    <path d="M10 14 H22 C24 15 24 20 22 21 H10 Z" fill="#38b7b5" />
                    <path d="M3 14 L14 14 L8 23 H3 C0 23 0 16 3 14 Z" fill="#2b2a5e" />
                  </svg>
                  <span className="font-['Inter',sans-serif] font-extrabold text-[22px] leading-none text-[#2b2a5e]">zip</span>
                  <span className="mx-1 w-px h-[22px] bg-[#38b7b5]" />
                  <span className="font-['Lato',sans-serif] font-normal text-[23px] leading-none text-[#2b2a5e]">money</span>
                </div>
              </ProviderCard>
            </div>
          </div>
        </div>
        <div className="w-[1140px] border-t border-[#e5e7eb] pt-9 text-center">Copyright 2024 Smile Ville | Privacy Policy | Terms And Conditions</div>
      </footer>

      {/* floating widgets */}
      <div className="absolute left-5 top-[1157px] w-[181px] h-[100px] rounded-lg bg-[#fafafa] shadow-[0_4px_16px_rgba(0,0,0,0.15)] flex flex-col items-center">
        <svg className="mt-[13px]" width="20" height="20" viewBox="0 0 48 48">
          <path fill="#EA4335" d="M24 9.5c3.54 0 6.71 1.22 9.21 3.6l6.85-6.85C35.9 2.38 30.47 0 24 0 14.62 0 6.51 5.38 2.56 13.22l7.98 6.19C12.43 13.72 17.74 9.5 24 9.5z" />
          <path fill="#4285F4" d="M46.98 24.55c0-1.57-.15-3.09-.38-4.55H24v9.02h12.94c-.58 2.96-2.26 5.48-4.78 7.18l7.73 6c4.51-4.18 7.09-10.36 7.09-17.65z" />
          <path fill="#FBBC05" d="M10.53 28.59c-.48-1.45-.76-2.99-.76-4.59s.27-3.14.76-4.59l-7.98-6.19C.92 16.46 0 20.12 0 24c0 3.88.92 7.54 2.56 10.78l7.97-6.19z" />
          <path fill="#34A853" d="M24 48c6.48 0 11.93-2.13 16.03-5.81l-7.73-6c-2.15 1.45-4.92 2.3-8.3 2.3-6.26 0-11.57-4.22-13.47-9.91l-7.98 6.19C6.51 42.62 14.62 48 24 48z" />
        </svg>
        <div className="mt-[10px] flex items-center gap-[9px]">
          <span className="font-['Liberation_Sans',sans-serif] font-bold text-[24px] leading-none text-[#111]">4.7</span>
          <svg width="108" height="21" viewBox="0 0 108 21">
            <defs>
              <linearGradient id="lastStar">
                <stop offset="68%" stopColor="#fbbc04" />
                <stop offset="68%" stopColor="#c8c8c8" />
              </linearGradient>
            </defs>
            {[0, 1, 2, 3, 4].map((i) => (
              <path
                key={i}
                transform={`translate(${i * 21.7} 0)`}
                d="M10.5 0 L13.6 6.9 L21 7.7 L15.4 12.7 L17 20 L10.5 16.3 L4 20 L5.6 12.7 L0 7.7 L7.4 6.9 Z"
                fill={i === 4 ? 'url(#lastStar)' : '#fbbc04'}
              />
            ))}
          </svg>
        </div>
        <span className="mt-1.5 text-[12px] leading-4 text-[#777] underline font-light">Read our 26 reviews</span>
      </div>

      <div className="absolute left-[2459px] top-[1107px] w-16 h-16 rounded-full bg-[#9a9a9a] flex items-center justify-center text-white">
        <ChevronUp size={30} strokeWidth={5} />
      </div>

      <div className="absolute left-[2473px] top-[1203px] w-[69px] h-[60px] bg-white shadow-[0_0_5px_rgba(0,0,0,0.4)] flex flex-col items-center">
        <svg className="mt-1.5" width="37" height="37" viewBox="0 0 37 37">
          <path d="M18.5 0 C12 0 6 4 3 9 L0 6 V18.5 H18.5 L14 13 C15 12 16.5 11 18.5 11 Z" fill="#4a90f5" />
          <path d="M18.5 0 V11 C21 11 23 12.5 24 14.5 L20 18.5 H37 V2 L32 7 C29 3 24 0 18.5 0 Z" fill="#1c3aa9" />
          <path d="M0 18.5 V36 L5 31 C8 34.5 13 37 18.5 37 C27 37 33 31 35 24 H24 C23 26 21 27 18.5 27 C15 27 12.5 25 11.5 22 L15 18.5 Z" fill="#b4b4b4" />
        </svg>
        <span className="text-[9px] leading-3 text-[#555] whitespace-nowrap">Privacy · Terms</span>
      </div>
    </div>
  );
}
